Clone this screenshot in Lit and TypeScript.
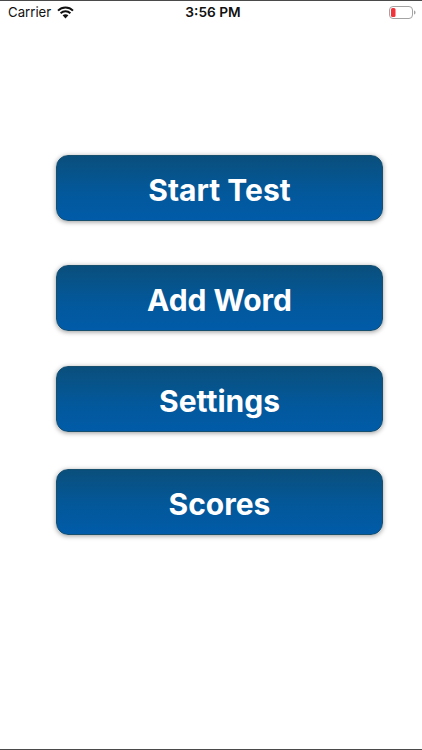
import { LitElement, html, css } from "lit";
import { customElement } from "lit/decorators.js";

@customElement("app-root")
export class AppRoot extends LitElement {
  static styles = css`
    :host {
      display: block;
      width: 422px;
      height: 750px;
      background: #fff;
      font-family: Inter, "Liberation Sans", sans-serif;
    }
    .page {
      box-sizing: border-box;
      height: 750px;
      display: flex;
      flex-direction: column;
      border-top: 1px solid #4a4a4a;
      border-bottom: 1px solid #4a4a4a;
    }
    .status {
      height: 22px;
      display: grid;
      grid-template-columns: 1fr auto 1fr;
      align-items: center;
      padding: 0 6px 0 8px;
      color: #111;
    }
    .left {
      display: flex;
      align-items: center;
      gap: 6px;
      font-size: 13.2px;
    }
    .time {
      font-size: 13.7px;
      font-weight: 600;
      padding-left: 2px;
    }
    .right {
      display: flex;
      justify-content: flex-end;
    }
    .stack {
      display: flex;
      flex-direction: column;
      padding: 132px 39px 0 56px;
    }
    .btn {
      height: 66px;
      box-sizing: border-box;
      display: flex;
      align-items: center;
      justify-content: center;
      border: 1px solid #17506f;
      border-radius: 12px;
      background: linear-gradient(#0a4f7c 0%, #03589a 55%, #015ba8 100%);
      box-shadow: 0 1px 5px rgba(0, 0, 0, 0.4);
      color: #fff;
      font-size: 30px;
      font-weight: 700;
      padding-top: 4px;
    }
    .g1 { margin-top: 44px; }
    .g2 { margin-top: 35px; }
    .g3 { margin-top: 37px; }
  `;

  render() {
    return html`
      <div class="page">
        <div class="status">
          <div class="left">
            <span>Carrier</span>
            <svg width="17" height="13" viewBox="0 0 17 13">
              <path d="M1 4.600C5.200 .5 11.800 .5 16 4.600" fill="none" stroke="#111" stroke-width="2" />
              <path d="M3.600 7.200C6.400 4.600 10.600 4.600 13.400 7.200" fill="none" stroke="#111" stroke-width="2" />
              <path d="M5.600 9.300C7.300 7.800 9.700 7.800 11.400 9.300L8.500 12.500z" fill="#111" />
            </svg>
          </div>
          <div class="time">3:56 PM</div>
          <div class="right">
            <svg width="27" height="13" viewBox="0 0 27 13">
              <rect x="0.500" y="0.500" width="23" height="12" rx="3.500" fill="none" stroke="#a3a3a3" />
              <rect x="2" y="2" width="4.500" height="9" rx="1.500" fill="#f0343a" />
              <path d="M25 4.500c1 .3 1.500 1 1.500 2s-.5 1.700-1.500 2z" fill="#a3a3a3" />
            </svg>
          </div>
        </div>
        <div class="stack">
          <div class="btn">Start Test</div>
          <div class="btn g1">Add Word</div>
          <div class="btn g2">Settings</div>
          <div class="btn g3">Scores</div>
        </div>
      </div>
    `;
  }
}
